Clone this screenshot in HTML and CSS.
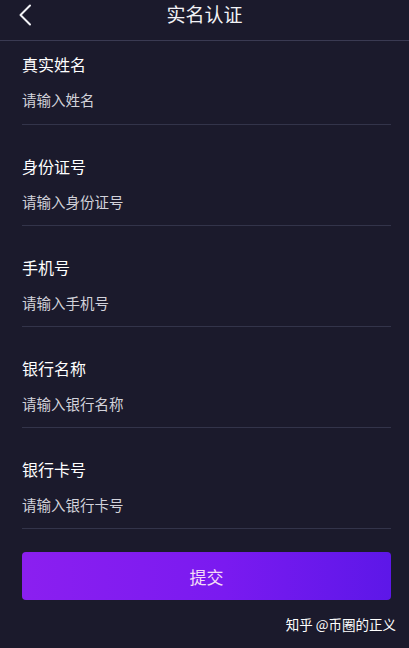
FILE: index.html
```html
<!DOCTYPE html>
<html lang="zh-CN">
<head>
    <meta charset="UTF-8">
    <meta name="viewport" content="width=device-width, initial-scale=1.0">
    <title>实名认证</title>
    <link rel="stylesheet" href="styles.css">
</head>
<body>
    <div class="header">
        <span class="back">
            <svg width="14" height="22" viewBox="0 0 14 22"><path d="M12 1.5 L2.5 11 L12 20.5" fill="none" stroke="#f2f2f6" stroke-width="2" stroke-linecap="round" stroke-linejoin="round"/></svg>
        </span>
        <h1>实名认证</h1>
    </div>

    <form class="form">
        <div class="form-group">
            <label>真实姓名</label>
            <input type="text" placeholder="请输入姓名">
        </div>
        <div class="form-group">
            <label>身份证号</label>
            <input type="text" placeholder="请输入身份证号">
        </div>
        <div class="form-group">
            <label>手机号</label>
            <input type="text" placeholder="请输入手机号">
        </div>
        <div class="form-group">
            <label>银行名称</label>
            <input type="text" placeholder="请输入银行名称">
        </div>
        <div class="form-group">
            <label>银行卡号</label>
            <input type="text" placeholder="请输入银行卡号">
        </div>
        <button type="button">提交</button>
    </form>

    <div class="mark">知乎 @币圈的正义</div>
</body>
</html>
```

FILE: styles.css
```css
body {
    margin: 0;
    background-color: #1b1a2c;
    font-family: "Noto Sans CJK SC", "Noto Sans", sans-serif;
    color: #f2f2f6;
    height: 648px;
    overflow: hidden;
}
.header {
    height: 40px;
    border-bottom: 1px solid #3a3a52;
    display: flex;
    align-items: center;
    justify-content: center;
    position: relative;
}
.back {
    position: absolute;
    left: 18px;
    top: 4px;
}
h1 {
    margin: 0;
    font-size: 19px;
    font-weight: normal;
    line-height: 28px;
    margin-top: -12px;
}
.form {
    padding: 0 18px 0 22px;
}
.form-group {
    border-bottom: 1px solid #33344a;
    height: 100px;
}
label {
    display: block;
    font-size: 16px;
    line-height: 22px;
    padding-top: 30px;
    color: #ffffff;
}
input {
    display: block;
    width: 100%;
    margin-top: 15px;
    padding: 0;
    border: none;
    background: transparent;
    font-family: inherit;
    font-size: 14.5px;
    line-height: 20px;
    color: #f2f2f6;
    outline: none;
}
input::placeholder {
    color: #d2d2da;
}
.form-group:first-child {
    height: 83px;
}
.form-group:first-child label {
    padding-top: 12px;
}
button {
    display: block;
    width: 100%;
    height: 48px;
    margin-top: 23px;
    border: none;
    border-radius: 4px;
    background: linear-gradient(90deg, #8b1ff0, #7a1af0 55%, #5d17e8);
    color: #f3dcf6;
    font-family: inherit;
    font-size: 17px;
}
.mark {
    text-align: right;
    padding-right: 13px;
    margin-top: 14px;
    font-size: 13.5px;
    line-height: 20px;
    color: #ffffff;
}
```
